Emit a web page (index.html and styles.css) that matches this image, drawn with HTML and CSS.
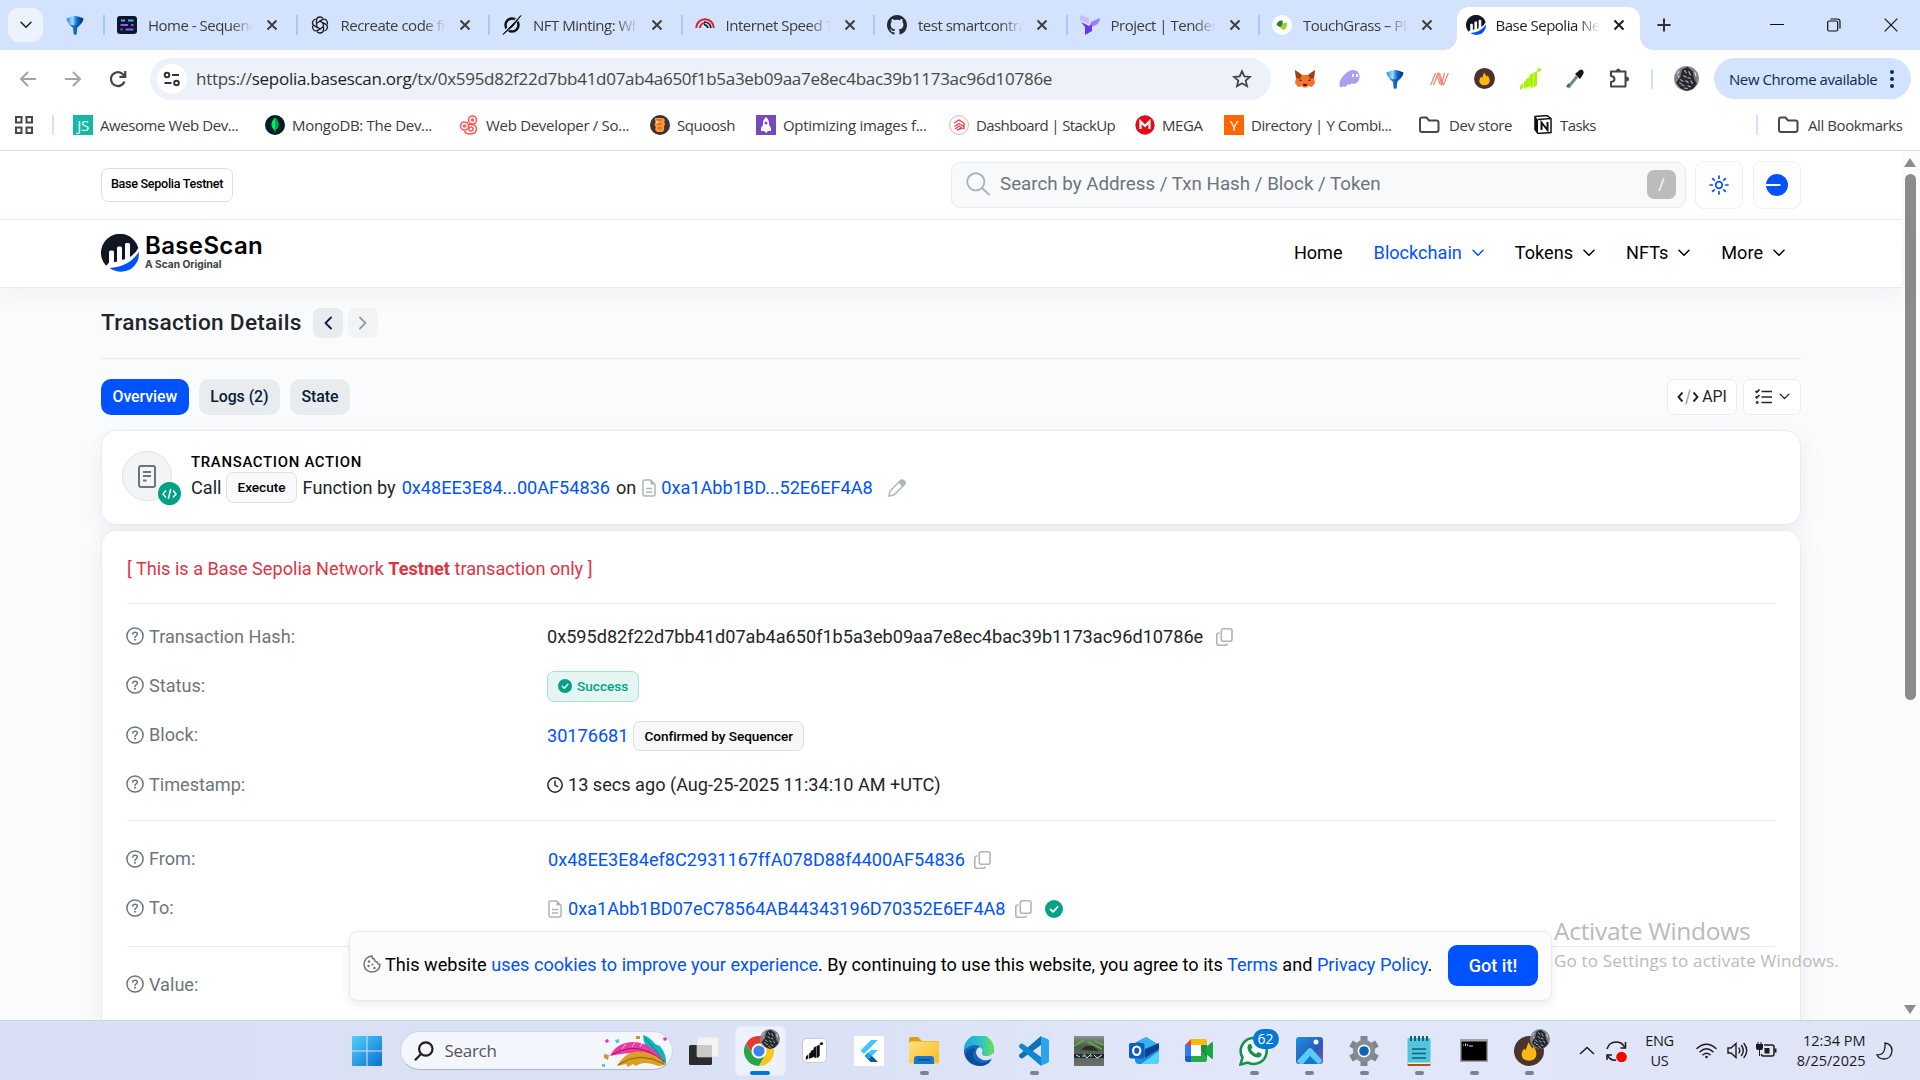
FILE: index.html
```html
<!DOCTYPE html>
<html lang="en">
<head>
<meta charset="utf-8">
<title>Base Sepolia Network Transaction Hash</title>
<link rel="stylesheet" href="styles.css">
</head>
<body>
<svg class="defs" width="0" height="0">
  <defs>
    <linearGradient id="gBlue" x1="0" y1="0" x2="1" y2="1"><stop offset="0" stop-color="#53d0fb"/><stop offset="1" stop-color="#0a6fd0"/></linearGradient>
    <linearGradient id="gDrop" x1="0" y1="0" x2="1" y2="0"><stop offset="0" stop-color="#1c86e6"/><stop offset=".35" stop-color="#a5dcff"/><stop offset=".6" stop-color="#0f6fd8"/><stop offset="1" stop-color="#06255e"/></linearGradient>
    <linearGradient id="gFold" x1="0" y1="0" x2="1" y2="1"><stop offset="0" stop-color="#ffe082"/><stop offset="1" stop-color="#fbbc1c"/></linearGradient>
    <linearGradient id="gEdge" x1="0" y1="0" x2="1" y2="0"><stop offset="0" stop-color="#1fa5e8"/><stop offset=".55" stop-color="#2cc3c9"/><stop offset="1" stop-color="#6ee04a"/></linearGradient>
    <linearGradient id="gF1" x1="0" y1="0" x2="0" y2="1"><stop offset="0" stop-color="#8a938c"/><stop offset=".35" stop-color="#4c5b4a"/><stop offset="1" stop-color="#6c706c"/></linearGradient>
    <linearGradient id="gPhoto" x1="0" y1="0" x2="1" y2="1"><stop offset="0" stop-color="#1793e6"/><stop offset=".6" stop-color="#2c59b8"/><stop offset="1" stop-color="#8a4db5"/></linearGradient>
    <radialGradient id="gFace"><stop offset="0" stop-color="#55585f"/><stop offset=".6" stop-color="#6a6d74"/><stop offset="1" stop-color="#8d9097"/></radialGradient>
  </defs>
  <symbol id="x" viewBox="0 0 12 12"><path d="M1.500 1.500l9 9M10.500 1.500l-9 9" fill="none" stroke="currentColor" stroke-width="2"/></symbol>
  <symbol id="chev" viewBox="0 0 12 8"><path d="M1 1.300l5 5 5-5" fill="none" stroke="currentColor" stroke-width="1.500" stroke-linecap="round" stroke-linejoin="round"/></symbol>
  <symbol id="drop" viewBox="0 0 20 20"><path d="M1.500 3.500Q10-1.500 18.500 3.500 18 8 12.300 12.500L11.500 19.500h-3l-.8-7Q2 8 1.500 3.500z" fill="url(#gDrop)"/><path d="M4 9q5 3 12-1l-4 5-.7 6.500H9L8 13z" fill="#0b56b5" opacity=".8"/></symbol>
  <symbol id="base" viewBox="0 0 38 38"><path d="M5.150 31.850A19 19 0 1 1 37.330 14Q35 19 29 23V10.500a1.500 1.500 0 0 0-1.500-1.500h-2a1.500 1.500 0 0 0-1.500 1.500V25l-3 1V14a1.500 1.500 0 0 0-1.500-1.500h-2A1.500 1.500 0 0 0 16 14v13.500l-3 .7V18a1.500 1.500 0 0 0-1.500-1.500h-2A1.500 1.500 0 0 0 8 18v10.500q-1 1.500-2.850 3.350z" fill="#111722"/><path d="M8.500 34Q28 33 37.700 18 39 28 30 35 19 41 8.500 34z" fill="#0052ff"/></symbol>
  <symbol id="folder" viewBox="0 0 22 18"><path d="M2 3.500Q2 1.500 4 1.500h4.500l2.500 3h7.500q2 0 2 2V14q0 2-2 2H4q-2 0-2-2z" fill="none" stroke="#474747" stroke-width="2"/></symbol>
  <symbol id="face" viewBox="0 0 24 24"><circle cx="12" cy="12" r="12" fill="url(#gFace)"/><path d="M8 3l5-2 5 4 1 7 3 5-4 5-6 2-6-3-4-5 4-5z" fill="#25272c"/><path d="M10 4l2 3M14 5l2 4M9 9l3 2M13 11l3 1M6 13l3 2M11 14l3 2M16 14l2 3M7 18l3 1M13 19l3 1M10 21l3 1M5 16l2 1" stroke="#b4b7bd" stroke-width="1.100"/><path d="M3 8l2-3M4 11l1-2M20 6l1 4" stroke="#d6d8dc" stroke-width="1.200"/></symbol>
  <symbol id="fire" viewBox="0 0 24 24"><circle cx="12" cy="12" r="12" fill="#4b342b"/><path d="M11.500 5Q13 7.500 14.800 10l.9-1.800Q18 11.500 18 14.500 17.500 19.500 12 19.800 6.500 19.500 6 14.500 6.300 12 8.200 10l1 1.500Q10.500 8 11.500 5z" fill="#fdb912"/></symbol>
  <symbol id="help" viewBox="0 0 18 18"><circle cx="9" cy="9" r="8.100" fill="none" stroke="currentColor" stroke-width="1.500"/><path d="M6.700 7.100Q6.900 5.200 9 5.200q2.300 0 2.400 1.900 0 1.300-1.500 2-.9.400-.9 1.300" fill="none" stroke="currentColor" stroke-width="1.500" stroke-linecap="round"/><circle cx="9" cy="12.700" r="1" fill="currentColor"/></symbol>
  <symbol id="copy" viewBox="0 0 17 18"><rect x="5.300" y=".8" width="10.700" height="12.500" rx="2" fill="none" stroke="currentColor" stroke-width="1.600"/><path d="M3.500 5H2.800q-2 0-2 2v8.200q0 2 2 2h6.400q2 0 2-1.700" fill="none" stroke="currentColor" stroke-width="1.600"/></symbol>
  <symbol id="doc" viewBox="0 0 14 18"><path d="M1 2.500Q1 1 2.500 1h6L13 5.500v10q0 1.500-1.500 1.500h-9Q1 17 1 15.500z" fill="none" stroke="currentColor" stroke-width="1.500"/><path d="M8.500 1v4.500H13z" fill="currentColor"/><path d="M4 9.500h6M4 13h6" stroke="currentColor" stroke-width="1.500"/></symbol>
  <symbol id="ok" viewBox="0 0 18 18"><circle cx="9" cy="9" r="9" fill="#00a186"/><path d="M5.500 9.300l2.500 2.500 4.700-5" fill="none" stroke="#fff" stroke-width="1.800" stroke-linecap="round" stroke-linejoin="round"/></symbol>
  <symbol id="horse" viewBox="0 0 22 22"><path d="M1 18l3-3v5l-3 2zM5 14l4-3v7l-4 3zM7 11l4-2v9l-3 2zM10.500 7L14 5v14l-2 1-1.500-4zM14.500 5L18 3v14l-3.500 3zM18 1.500Q20-.5 22 1v2l-3 1z" fill="currentColor"/></symbol>
</svg>

<header class="browser">
  <div class="tabstrip">
    <button class="tabsearch"><svg width="12" height="8"><use href="#chev"/></svg></button>
    <div class="pinned"><svg width="20" height="20"><use href="#drop"/></svg></div>
    <div class="tab"><svg width="20" height="18" viewBox="0 0 20 18"><rect width="20" height="18" rx="3" fill="#15132b"/><path d="M4 4.500h4M11 4.500h5.500" stroke="#36b8e8" stroke-width="2"/><path d="M3.500 9H11" stroke="#8b5cf6" stroke-width="2"/><path d="M14 9h2.500M3.500 13.500h2" stroke="#5b6ef2" stroke-width="2"/><path d="M8.500 13.500h8" stroke="#6a6ff5" stroke-width="2"/></svg><span class="ttl">Home - Sequence</span><svg class="cl" width="12" height="12"><use href="#x"/></svg></div>
    <div class="tab"><svg width="18" height="18" viewBox="0 0 18 18" fill="none" stroke="#1c1c1c" stroke-width="1.300"><g id="pet"><path d="M9 5.200L5.500 7.200V3.800Q6 1 9 1q2 0 3 1.300"/></g><use href="#pet" transform="rotate(60 9 9)"/><use href="#pet" transform="rotate(120 9 9)"/><use href="#pet" transform="rotate(180 9 9)"/><use href="#pet" transform="rotate(240 9 9)"/><use href="#pet" transform="rotate(300 9 9)"/></svg><span class="ttl">Recreate code fro</span><svg class="cl" width="12" height="12"><use href="#x"/></svg></div>
    <div class="tab"><svg width="20" height="20" viewBox="0 0 20 20"><circle cx="10" cy="10" r="6.500" fill="none" stroke="#111" stroke-width="2.500"/><path d="M1.500 19L18.500 1" stroke="#d3e3fd" stroke-width="3.500"/><path d="M1 19.500L19 .5 11 11z" fill="#111" stroke="#111"/></svg><span class="ttl">NFT Minting: Wha</span><svg class="cl" width="12" height="12"><use href="#x"/></svg></div>
    <div class="tab"><svg width="20" height="20" viewBox="0 0 20 20" fill="none"><path d="M1.200 13A8.800 8.800 0 0 1 18.800 13M5 13a5 5 0 0 1 5-5" stroke="#d8202c" stroke-width="2"/><path d="M9 7q6 0 7 6M9 9.500q3 .5 4 3.500" stroke="#1b1b1b" stroke-width="1.700"/></svg><span class="ttl">Internet Speed Te</span><svg class="cl" width="12" height="12"><use href="#x"/></svg></div>
    <div class="tab"><svg width="20" height="20" viewBox="0 0 16 16"><path fill="#24292f" d="M8 0C3.580 0 0 3.580 0 8c0 3.540 2.290 6.530 5.470 7.590.4.070.55-.17.55-.38 0-.19-.01-.82-.01-1.490-2.010.37-2.530-.49-2.690-.94-.09-.23-.48-.94-.82-1.130-.28-.15-.68-.52-.01-.53.63-.01 1.080.58 1.230.82.72 1.210 1.870.87 2.330.66.070-.52.28-.87.51-1.070-1.780-.2-3.640-.89-3.640-3.950 0-.87.31-1.590.82-2.150-.08-.2-.36-1.020.08-2.120 0 0 .67-.21 2.200.82.64-.18 1.320-.27 2-.27s1.360.09 2 .27c1.530-1.040 2.200-.82 2.200-.82.44 1.100.16 1.920.08 2.120.51.56.82 1.270.82 2.150 0 3.070-1.870 3.750-3.650 3.950.29.25.54.73.54 1.480 0 1.070-.01 1.930-.01 2.200 0 .21.15.46.55.38A8.010 8.010 0 0 0 16 8c0-4.420-3.580-8-8-8z"/></svg><span class="ttl">test smartcontract</span><svg class="cl" width="12" height="12"><use href="#x"/></svg></div>
    <div class="tab"><svg width="20" height="20" viewBox="0 0 20 20"><path d="M0 0l9 3v6L0 5z" fill="#cdbcfb"/><path d="M20 3l-9 4-2 5 5-1q6-3 6-8z" fill="#9b7df7"/><path d="M1 7l8 4 3-1v6l-7 4V12z" fill="#6837f5"/></svg><span class="ttl">Project | Tenderly</span><svg class="cl" width="12" height="12"><use href="#x"/></svg></div>
    <div class="tab last"><svg width="20" height="20" viewBox="0 0 20 20"><circle cx="10" cy="10" r="10" fill="#fff"/><path d="M4.500 10q1-5 6-4.500 1 5-2 7z" fill="#25803a"/><path d="M9 13q0-5 6-5.500Q15.500 14 11 15z" fill="#9ad51f"/></svg><span class="ttl">TouchGrass – Play</span><svg class="cl" width="12" height="12"><use href="#x"/></svg></div>
    <div class="tab active"><svg width="20" height="20"><use href="#base"/></svg><span class="ttl">Base Sepolia Netw</span><svg class="cl" width="12" height="12"><use href="#x"/></svg></div>
    <svg class="plus" width="14" height="14" viewBox="0 0 14 14"><path d="M7 .5v13M.5 7h13" stroke="#333" stroke-width="2"/></svg>
    <div class="winctl">
      <svg width="14" height="14" viewBox="0 0 14 14"><path d="M0 6.500h14" stroke="#111"/></svg>
      <svg width="14" height="14" viewBox="0 0 14 14" fill="none" stroke="#111" stroke-width="1.200"><rect x=".7" y="3" width="10" height="10" rx="1.500"/><path d="M3.500 1h7Q13 1 13 3.500v7"/></svg>
      <svg width="14" height="14" viewBox="0 0 14 14"><path d="M.7.7l12.600 12.600M13.300.7L.7 13.300" stroke="#111" stroke-width="1.200"/></svg>
    </div>
  </div>

  <div class="toolbar">
    <div class="navbtns">
      <svg width="18" height="18" viewBox="0 0 18 18" fill="none" stroke="#a3a5a8" stroke-width="2"><path d="M17 9H2M9 2L2 9l7 7"/></svg>
      <svg width="18" height="18" viewBox="0 0 18 18" fill="none" stroke="#a3a5a8" stroke-width="2"><path d="M1 9h15M9 2l7 7-7 7"/></svg>
      <svg width="18" height="18" viewBox="0 0 18 18" fill="none" stroke="#444" stroke-width="2.200"><path d="M15.500 11.500A7 7 0 1 1 14 4.200L16 6.200"/><path d="M16.200 1v5.800h-5.800"/></svg>
    </div>
    <div class="omni">
      <span class="chip"><svg width="18" height="16" viewBox="0 0 18 16" fill="none" stroke="#333" stroke-width="2"><circle cx="4" cy="4" r="2.300"/><path d="M9 4h7M1.500 12h7"/><circle cx="13.500" cy="12" r="2.300"/></svg></span>
      <span class="url"><i>https://</i>sepolia.basescan.org<i>/tx/0x595d82f22d7bb41d07ab4a650f1b5a3eb09aa7e8ec4bac39b1173ac96d10786e</i></span>
      <svg class="star" width="20" height="20" viewBox="0 0 20 20"><path d="M10 2.200l2.300 5.200 5.700.5-4.300 3.700 1.300 5.600-5-3-5 3 1.300-5.600L2 7.900l5.700-.5z" fill="none" stroke="#444" stroke-width="1.800"/></svg>
    </div>
    <div class="exts">
      <svg width="20" height="19" viewBox="0 0 20 19"><path d="M0 1l7 5h6l7-5-1 8 1 5-3 4-4-1-1 1.500H8L7 17l-4 1-3-4 1-5z" fill="#f5722a"/><path d="M0 1l7 5-2 4-4-1zM20 1l-7 5 2 4 4-1z" fill="#a3401b"/><path d="M5 10l2 2H4.500zM15 10l-2 2h2.500zM8 15h4l-.5 2h-3z" fill="#2f1d20"/></svg>
      <svg width="21" height="20" viewBox="0 0 21 20"><path d="M1 18Q-1 12 5 6 12-1 18 2q4 3 2 9-2 4-6 4l-1-1q-2 3-4 1-2 4-5 2-1 2-3 1z" fill="#ab9ff2"/><path d="M14 5v3M18 5v3" stroke="#fff" stroke-width="1.800"/></svg>
      <svg width="20" height="20"><use href="#drop"/></svg>
      <svg width="19" height="14" viewBox="0 0 19 14" fill="none" stroke="#e68a6b" stroke-width="1.200"><path d="M.8 13L5.500 1M3.500 13L8 1l4 12 1-1L9.500 1M6.500 3l4 10M13.500 13L18.300 1M12.500 9l2-8"/></svg>
      <svg width="21" height="21"><use href="#fire"/></svg>
      <svg class="lime" width="22" height="22"><use href="#horse"/></svg>
      <svg width="18" height="20" viewBox="0 0 18 20"><path d="M2 18.500L11 7.500" stroke="#6a8f7c" stroke-width="3"/><path d="M9 5l5 5 3-4.500q1.500-3-.5-4.500t-4 1z" fill="#151515"/><path d="M1 18l2-3" stroke="#2c6b3c" stroke-width="2"/></svg>
      <svg width="21" height="21" viewBox="0 0 21 21"><path d="M2 3.500h14.500v15H2v-4.500q3.500-.5 3.500-3t-3.500-3z" fill="none" stroke="#444" stroke-width="2" stroke-linejoin="round"/><path d="M7 3q0-2.500 2.300-2.500T11.500 3zM17 8.500q3 0 3 2.500t-3 2.500z" fill="#444"/></svg>
    </div>
    <i class="vsep"></i>
    <svg class="me" width="25" height="25"><use href="#face"/></svg>
    <div class="update">New Chrome available<svg width="4" height="18" viewBox="0 0 4 18"><circle cx="2" cy="2" r="2"/><circle cx="2" cy="9" r="2"/><circle cx="2" cy="16" r="2"/></svg></div>
  </div>

  <nav class="marks">
    <svg width="18" height="18" viewBox="0 0 18 18" fill="none" stroke="#474747" stroke-width="2"><rect x="1" y="1" width="5.500" height="5.500"/><rect x="11.500" y="1" width="5.500" height="5.500"/><rect x="1" y="11.500" width="5.500" height="5.500"/><rect x="11.500" y="11.500" width="5.500" height="5.500"/></svg>
    <i class="vsep"></i>
    <a><b class="ic js">JS</b>Awesome Web Dev...</a>
    <a class="wide"><svg class="ic" viewBox="0 0 20 20"><circle cx="10" cy="10" r="10" fill="#011e2b"/><path d="M10 2.500q4 4.500 3.500 8Q13 14 10.400 15v2.500h-.8V15Q7 14 6.500 10.500 6 7 10 2.500z" fill="#00ed64"/><path d="M10 2.500q4 4.500 3.500 8Q13 14 10 15z" fill="#00a844"/></svg>MongoDB: The Dev...</a>
    <a class="wide"><svg class="ic" viewBox="0 0 20 20" fill="none" stroke="#fa5c5c" stroke-width="1.600"><circle cx="13.500" cy="5" r="4"/><circle cx="13.500" cy="5" r="1"/><circle cx="5.500" cy="11" r="4"/><circle cx="5.500" cy="11" r="1"/><path d="M10 9.500q7-1 7.500 4 0 5.500-7 5.500-4 0-5-3"/><circle cx="12" cy="14" r="2"/></svg>Web Developer / So...</a>
    <a><svg class="ic" viewBox="0 0 20 20"><circle cx="10" cy="10" r="10" fill="#3a3432"/><path d="M5 3h8q3 2 1 4 2 2 0 4 1 3-1 6H7q-3-3-1-5-3-2 0-5-2-2-1-4z" fill="#ff9730"/><path d="M6 5h6M7 9h5M8 13h4" stroke="#c44b17" stroke-width="1.200"/><circle cx="7" cy="7" r="1.500" fill="#f7d6a0"/></svg>Squoosh</a>
    <a class="wide"><svg class="ic" viewBox="0 0 20 20"><path d="M0 0h20v20H0z" fill="#764abc"/><path d="M10 2q3.500 3 3 8l2 3v3h-3l-2 2-2-2H5v-3l2-3q-.5-5 3-8z" fill="#fff"/><circle cx="10" cy="8" r="1.500" fill="#764abc"/></svg>Optimizing images f...</a>
    <a class="slim"><svg class="ic" viewBox="0 0 20 20" fill="none" stroke="#e8434f"><circle cx="10" cy="10" r="9.400" stroke="#f4a5ab"/><path d="M5 8l5-3 5 3M5.500 11.500L10 8.500l4.500 3M8 15l4-1.500M6 14l4-3 4 3M15 8v6" stroke-width="1.400"/></svg>Dashboard | StackUp</a>
    <a><svg class="ic" viewBox="0 0 20 20"><circle cx="10" cy="10" r="9.700" fill="#e50b16"/><path d="M5.500 14V6.500L10 11l4.500-4.500V14" fill="none" stroke="#fff" stroke-width="2.200"/></svg>MEGA</a>
    <a><b class="ic yc">Y</b>Directory | Y Combi...</a>
    <a><svg class="fd" width="22" height="18"><use href="#folder"/></svg>Dev store</a>
    <a class="slim"><svg class="nt" width="18" height="19" viewBox="0 0 18 19"><path d="M1 1.500l12-1 4 3v14l-13 1-3-4z" fill="#fff" stroke="#111" stroke-width="1.500"/><path d="M1 1.500l3 3v14l-3-4z" fill="#111"/><path d="M4 4.500l13-1" stroke="#111" stroke-width="1.500"/><path d="M7.500 15V7.500l6 7.500V7" stroke="#111" stroke-width="2" fill="none"/></svg>Tasks</a>
    <i class="vsep"></i>
    <a><svg class="fd" width="22" height="18"><use href="#folder"/></svg>All Bookmarks</a>
  </nav>
</header>

<div class="viewport">
  <main class="site">
    <div class="topbar">
      <div class="netbadge">Base Sepolia Testnet</div>
      <div class="tools">
        <div class="search"><svg width="24" height="24" viewBox="0 0 24 24" fill="none" stroke="#a9b2bb" stroke-width="1.900" stroke-linecap="round"><circle cx="9.800" cy="9.800" r="8.600"/><path d="M16 16l7 6.500"/></svg><span>Search by Address / Txn Hash / Block / Token</span><kbd>/</kbd></div>
        <div class="sq"><svg width="20" height="20" viewBox="0 0 20 20" fill="none" stroke="#0052ff" stroke-width="1.700" stroke-linecap="round"><circle cx="10" cy="10" r="3.300"/><path d="M10 1v2.300M10 16.700V19M1 10h2.300M16.700 10H19M3.600 3.600l1.600 1.600M14.800 14.800l1.600 1.600M16.400 3.600l-1.600 1.600M5.200 14.800l-1.600 1.600"/></svg></div>
        <div class="sq"><svg width="22" height="22" viewBox="0 0 22 22"><circle cx="11" cy="11" r="11" fill="#0052ff"/><path d="M0 11h14.500" stroke="#fff" stroke-width="2"/></svg></div>
      </div>
    </div>
    <div class="navbar">
      <div class="logo"><svg width="38" height="38"><use href="#base"/></svg><div><strong>BaseScan</strong><small>A Scan Original</small></div></div>
      <nav class="menu"><a>Home</a><a class="on">Blockchain<svg width="12" height="8"><use href="#chev"/></svg></a><a>Tokens<svg width="12" height="8"><use href="#chev"/></svg></a><a>NFTs<svg width="12" height="8"><use href="#chev"/></svg></a><a>More<svg width="12" height="8"><use href="#chev"/></svg></a></nav>
    </div>
    <section class="content">
      <div class="head"><h1>Transaction Details</h1>
        <span class="pg"><svg width="8" height="14" viewBox="0 0 8 14"><path d="M7 1.500L1.500 7 7 12.500" fill="none" stroke="#081d35" stroke-width="1.800" stroke-linecap="round"/></svg></span>
        <span class="pg off"><svg width="8" height="14" viewBox="0 0 8 14"><path d="M1 1.500L6.500 7 1 12.500" fill="none" stroke="#081d35" stroke-width="1.800" stroke-linecap="round"/></svg></span>
      </div>
      <div class="tabs">
        <span class="pill cur">Overview</span><span class="pill">Logs (2)</span><span class="pill">State</span>
        <span class="btn api"><svg width="22" height="16" viewBox="0 0 22 16" fill="none" stroke="#212529" stroke-width="1.900"><path d="M5.500 3.500L1.500 8l4 4.500M16.500 3.500l4 4.500-4 4.500"/><path d="M13 .5L9 15.500" stroke="#a5a9ad" stroke-width="1.500"/></svg>API</span>
        <span class="btn"><svg width="17" height="16" viewBox="0 0 17 16" fill="none" stroke="#212529" stroke-width="1.700"><path d="M6.500 2.500H17M6.500 8H17M6.500 13.500H17M.5 2l1.300 1.300L4.500.5M.5 7.500l1.300 1.300L4.500 6"/><circle cx="2.200" cy="13.500" r=".6"/></svg><svg width="11" height="7"><use href="#chev"/></svg></span>
      </div>

      <article class="card action">
        <div class="avatar"><svg width="18" height="23" viewBox="0 0 18 23" fill="none" stroke="#6c757d" stroke-width="2"><rect x="1" y="1" width="16" height="21" rx="2"/><path d="M5 7h8M5 11h8M5 15.500h3.500"/></svg>
          <span class="code"><svg width="15" height="12" viewBox="0 0 15 12" fill="none" stroke="#fff" stroke-width="1.500"><path d="M4 2.500L1 6l3 3.500M11 2.500L14 6l-3 3.500M8.700 1L6.300 11"/></svg></span></div>
        <div><div class="cap">TRANSACTION ACTION</div>
          <div class="line">Call<span class="tag">Execute</span>Function by<a class="a1">0x48EE3E84...00AF54836</a>on<svg class="mut d1" width="14" height="18"><use href="#doc"/></svg><a>0xa1Abb1BD...52E6EF4A8</a><svg class="mut pen" width="18" height="18" viewBox="0 0 18 18"><path d="M1 17l1-5L12 2q2-2 4 0t0 4L6 16z" fill="none" stroke="currentColor" stroke-width="1.500"/><path d="M10.500 3.500L13 1q2-1 4 1t0 3.500l-2.500 2.500z" fill="currentColor"/></svg></div></div>
      </article>

      <article class="card details">
        <p class="warn">[ This is a Base Sepolia Network <b>Testnet</b> transaction only ]</p>
        <div class="group">
          <div class="row"><label><svg width="18" height="18"><use href="#help"/></svg>Transaction Hash:</label><div>0x595d82f22d7bb41d07ab4a650f1b5a3eb09aa7e8ec4bac39b1173ac96d10786e<svg class="mut c1" width="17" height="18"><use href="#copy"/></svg></div></div>
          <div class="row"><label><svg width="18" height="18"><use href="#help"/></svg>Status:</label><div><span class="status"><svg width="14" height="14"><use href="#ok"/></svg>Success</span></div></div>
          <div class="row"><label><svg width="18" height="18"><use href="#help"/></svg>Block:</label><div><a>30176681</a><span class="tag conf">Confirmed by Sequencer</span></div></div>
          <div class="row"><label><svg width="18" height="18"><use href="#help"/></svg>Timestamp:</label><div><svg class="clock" width="16" height="16" viewBox="0 0 16 16" fill="none" stroke="#212529" stroke-width="1.500"><circle cx="8" cy="8" r="7.200"/><path d="M8 3.500V8l3 2"/></svg>13 secs ago (Aug-25-2025 11:34:10 AM +UTC)</div></div>
        </div>
        <div class="group g2">
          <div class="row"><label><svg width="18" height="18"><use href="#help"/></svg>From:</label><div><a class="from">0x48EE3E84ef8C2931167ffA078D88f4400AF54836</a><svg class="mut c2" width="17" height="18"><use href="#copy"/></svg></div></div>
          <div class="row"><label><svg width="18" height="18"><use href="#help"/></svg>To:</label><div><svg class="mut d2" width="14" height="18"><use href="#doc"/></svg><a>0xa1Abb1BD07eC78564AB44343196D70352E6EF4A8</a><svg class="mut c2" width="17" height="18"><use href="#copy"/></svg><svg class="vok" width="18" height="18"><use href="#ok"/></svg></div></div>
        </div>
        <div class="group g3">
          <div class="row"><label><svg width="18" height="18"><use href="#help"/></svg>Value:</label></div>
        </div>
      </article>
    </section>
  </main>
  <aside class="scroll"><i class="up"></i><i class="thumb"></i><i class="down"></i></aside>
  <div class="cookie"><svg width="18" height="18" viewBox="0 0 18 18" fill="none" stroke="#6c757d" stroke-width="1.500"><path d="M9 1Q2 1.500 1 9q.5 7.500 8 8 7.500-.5 8-7.500-2.500-.2-2.800-2.500Q11.500 7 11.300 4 9 4 9 1z"/><g fill="#6c757d" stroke="none"><circle cx="6" cy="6.500" r="1.200"/><circle cx="5.500" cy="11" r="1.200"/><circle cx="9.500" cy="9.500" r="1"/><circle cx="11.500" cy="13" r="1.200"/></g></svg><span>This website <a>uses cookies to improve your experience</a>. By continuing to use this website, you agree to its <a>Terms</a> and <a>Privacy Policy</a>.</span><button>Got it!</button></div>
  <div class="activate"><div>Activate Windows</div><p>Go to Settings to activate Windows.</p></div>
</div>

<footer class="taskbar">
  <div class="app"><svg width="30" height="30" viewBox="0 0 30 30" fill="url(#gBlue)"><path d="M0 1q0-1 1-1h13.500v14.500H0zM15.500 0H29q1 0 1 1v13.500H15.500zM0 15.500h14.500V30H1q-1 0-1-1zM15.500 15.500H30V29q0 1-1 1H15.500z"/></svg></div>
  <div class="tsearch"><svg width="20" height="20" viewBox="0 0 20 20" fill="none" stroke="#1d1d1d" stroke-width="2.200"><circle cx="11.800" cy="8" r="6.700"/><path d="M7 13l-6 6.200"/></svg><span>Search</span>
    <svg class="art" width="66" height="32" viewBox="0 0 66 32"><path d="M41 0Q48 2 53 9l5 2q7 9 6 18Q42 20 41 0z" fill="#12b5bd"/><path d="M43 3q8 8 19 24" stroke="#067d8a" fill="none"/><path d="M8 21Q14 8 30 7q18-1 34 22Q48 14 30 18q-14 1-22 3z" fill="#ee3aa0"/><path d="M10 20q26-16 52 7" stroke="#a70f68" fill="none"/><path d="M20 14l4-5M30 12l3-5M38 12l2-4" stroke="#fff" stroke-width=".7"/><path d="M15 31q10-17 26-14 15 2 23 13l-8 1q-14-6-22 0l-3-2-5 3-2-3z" fill="#dba022"/><path d="M16 30q22-15 46-1" stroke="#8c5a0c" fill="none"/><path d="M3 5l3-1 1 3-3 1z" fill="#ee3aa0"/><path d="M13 5l4-1v4h-3z" fill="#41d3e5"/><path d="M34 1h4v3h-4z" fill="#c79745"/><path d="M61 3l3-1 1 3-3 1z" fill="#ee3aa0"/><path d="M2 19l5 1-1 5-4-2z" fill="#c79745"/><path d="M0 29h3v3H0z" fill="#41d3e5"/></svg></div>
  <div class="app"><svg width="30" height="28" viewBox="0 0 30 28"><rect y="8" width="23" height="20" rx="1.500" fill="#2c2c2c"/><rect x="8" width="22" height="20" rx="1.500" fill="#f3f3f2" stroke="#d8d8d6" stroke-width=".6"/><path d="M8 8h15v12H8z" fill="#c9c9c8"/></svg></div>
  <div class="app tile"><svg width="30" height="30" viewBox="0 0 30 30"><circle cx="15" cy="15" r="15" fill="#fff"/><path d="M2 7.500A15 15 0 0 1 28 7.500H15A7.500 7.500 0 0 0 8.500 18.700z" fill="#e33b2e"/><path d="M2 7.500A15 15 0 0 0 15 30l6.500-11.300A7.500 7.500 0 0 1 8.500 18.700z" fill="#2ba24c"/><path d="M28 7.500A15 15 0 0 1 15 30l6.500-11.300A7.500 7.500 0 0 0 15 7.500z" fill="#fdc515"/><circle cx="15" cy="15" r="7" fill="#fff"/><circle cx="15" cy="15" r="5.600" fill="#3f82ee"/></svg><svg class="mini" width="20" height="20"><use href="#face"/></svg><i class="run wide"></i></div>
  <div class="app"><span class="wh"><svg width="18" height="18"><use href="#horse"/></svg></span></div>
  <div class="app"><span class="flt"><svg width="18" height="22" viewBox="0 0 18 22"><path d="M11 0h7L4 14l-3.500-3.500z" fill="#45c5f8"/><path d="M11 10h7l-6 6-3.500-3.500z" fill="#45c5f8"/><path d="M8 12.500L4.700 16l6 6H18l-6-6z" fill="#0b579f"/><path d="M8.200 12.300l3.700 3.700-3.500 3.500L4.700 16z" fill="#1fa1e4"/></svg></span></div>
  <div class="app"><svg width="30" height="28" viewBox="0 0 30 28"><path d="M0 2q0-2 2-2h7l4 4h15q2 0 2 2v6H0z" fill="#e0a106"/><rect y="4.500" width="30" height="22" rx="2" fill="url(#gFold)"/><path d="M5 27v-5q0-3 3-3h14q3 0 3 3v5z" fill="#1378cf"/><path d="M9 22.800h12" stroke="#0a4c91" stroke-width="1.500"/></svg><i class="run"></i></div>
  <div class="app"><svg width="30" height="30" viewBox="0 0 30 30"><circle cx="15" cy="15" r="15" fill="#1269bd"/><path d="M0 14A15 15 0 0 1 30 13q0 7-8 7-4 0-4-3 2-3-1-6Q9 6 0 14z" fill="url(#gEdge)"/><path d="M11 13q-4 5-.5 10 5 6 13 3l4-2q-4 6-12 6Q3 28 1 18 5 12 11 13z" fill="#0c4c9c"/><path d="M18 17q0 3 4 3 5 0 8-4v6l-3 1q-4 2-8 1-6-2-7-7 0-5 4-6 4 2 2 6z" fill="#dbe4f8"/></svg></div>
  <div class="app"><svg width="30" height="30" viewBox="0 0 30 30"><path d="M22 0v9L4 22q-2 1-3-.5l-1-1Q-.5 19 1 18z" fill="#0b72b8"/><path d="M22 30v-9L4 8Q2 7 1 8.500l-1 1Q-.5 11 1 12z" fill="#1287d0"/><path d="M21 0l7.500 3Q30 4 30 5v20q0 1-1.500 2L21 30q1-1 1-2V2q0-1-1-2z" fill="#2ba4ee"/></svg><i class="run"></i></div>
  <div class="app"><svg width="30" height="30" viewBox="0 0 30 30"><path d="M0 0h30v30H0z" fill="url(#gF1)"/><path d="M0 10l10-6M14 6l14 7M20 5l10 4" stroke="#5fae4a" stroke-width="1.500"/><path d="M7 14l5-4h7l6 5z" fill="#26302a"/><path d="M0 18h30v4H0z" fill="#23282a"/><path d="M2 19l4 2M10 18l3 4 4-4M20 19l3 3 5-3" stroke="#d5dada" fill="none"/><path d="M8 20h3M16 20h2" stroke="#2ba5a0" stroke-width="2"/></svg></div>
  <div class="app"><svg width="30" height="27" viewBox="0 0 30 27"><path d="M4 7L17 0l13 8v15q0 4-4 4H10q-4 0-4-4z" fill="#1b8fe0"/><path d="M10 4l7-4 13 8-13 8z" fill="#33b4f2"/><path d="M16 12L30 6v6l-14 9z" fill="#0d3f8f"/><path d="M12 27l18-13v9q0 4-4 4z" fill="#52d3fb"/><rect y="6" width="15.500" height="15.500" rx="2" fill="#0f5fb8"/><ellipse cx="7.700" cy="13.700" rx="3.600" ry="4.200" fill="none" stroke="#fff" stroke-width="2.200"/></svg></div>
  <div class="app"><svg width="28" height="23" viewBox="0 0 28 23"><path d="M6 0h14q2 0 2 2v4H6z" fill="#fbb90b"/><path d="M6 0v6H0z" fill="#e8402f"/><path d="M0 6h6v11H0z" fill="#2d7bf0"/><path d="M0 17h6v6H2q-2 0-2-2z" fill="#1a5fd0"/><path d="M6 17h10v-5l6 5v4q0 2-2 2H6z" fill="#27a84a"/><path d="M16 6h6v12l-6-6z" fill="#17913a"/><path d="M6 6h10v11H6z" fill="#fff"/><path d="M21 8l6-5q1 0 1 1v15q0 1-1 1l-6-5z" fill="#1fa348"/></svg></div>
  <div class="app"><svg width="30" height="30" viewBox="0 0 30 30"><path d="M1.500 28.500l2-7A13 13 0 1 1 9 26.600z" fill="#f5faf8" stroke="#178f50" stroke-width="2.600"/><path d="M9.500 8.500q2-1.500 3 .5l1 2.500-1.500 2q1.500 3 5 4.500l2-2 3.500 1.500q.5 3-3 4-4 .5-8.500-4-4-5-1.500-9z" fill="#178f50"/></svg><b class="cnt">62</b><i class="run"></i></div>
  <div class="app"><svg width="27" height="27" viewBox="0 0 27 27"><rect width="27" height="27" rx="3" fill="url(#gPhoto)"/><path d="M1 24L12 12q2-2 4 0l10 11q-1 4-4 4H4q-2 0-3-3z" fill="#54cdf7"/><path d="M7 27l7-8 8 8z" fill="#1377cc"/><circle cx="20" cy="5" r="2.500" fill="#fff"/></svg><i class="run"></i></div>
  <div class="app"><svg width="30" height="30" viewBox="0 0 30 30"><path d="M15 0v30M2 7.500l26 15M28 7.500l-26 15" stroke="#7f868c" stroke-width="7"/><circle cx="15" cy="15" r="11" fill="#868d93"/><circle cx="15" cy="15" r="6.400" fill="#fff"/><circle cx="15" cy="15" r="4.800" fill="#0d62b5"/></svg><i class="run"></i></div>
  <div class="app"><svg width="24" height="30" viewBox="0 0 24 30"><rect x=".5" y="26" width="23" height="4" rx="1" fill="#b05413"/><rect x=".5" y="2" width="23" height="25" rx="1.500" fill="#54c4dd"/><path d="M.5 26.500h23v1.500H.5z" fill="#f0efe9"/><path d="M5 13h14M5 17.500h14M5 22h14" stroke="#09627f" stroke-width="1.700"/><path d="M4 0v5M8 0v5M12 0v5M16 0v5M20 0v5" stroke="#09627f" stroke-width="2"/></svg><i class="run"></i></div>
  <div class="app"><svg width="28" height="23" viewBox="0 0 28 23"><rect width="28" height="23" fill="#a3a3a3"/><path d="M1.500 2.500h25v19h-25z" fill="#000"/><path d="M3 6h1M5.500 4.500v2.500M7 5l1 2M9 7h4" stroke="#ddd"/></svg><i class="run"></i></div>
  <div class="app"><svg width="30" height="30"><use href="#fire"/></svg><svg class="mini" width="20" height="20"><use href="#face"/></svg><i class="run"></i></div>
  <div class="tray">
    <svg width="16" height="9" viewBox="0 0 16 9"><path d="M1 8l7-6.500L15 8" fill="none" stroke="#1b1b1b" stroke-width="1.500"/></svg>
    <svg width="21" height="22" viewBox="0 0 21 22" fill="none" stroke="#1b1b1b" stroke-width="1.500"><path d="M1 9Q3 2 10 2q6 0 8.500 5M19.500 2v6h-5M1 20v-5h5M2 16q3 5 8 4"/><circle cx="15.500" cy="17" r="5.300" fill="#f00" stroke="none"/></svg>
    <div class="lang">ENG<br>US</div>
    <svg width="21" height="16" viewBox="0 0 21 16" fill="none" stroke="#1b1b1b" stroke-width="1.500" stroke-linecap="round"><path d="M1 5.500Q10.500-3 20 5.500M4 8.700q6.500-5.800 13 0M7 11.700q3.500-3 7 0"/><circle cx="10.500" cy="14" r="1.300" fill="#1b1b1b" stroke="none"/></svg>
    <svg width="21" height="17" viewBox="0 0 21 17" fill="none" stroke="#1b1b1b" stroke-width="1.400" stroke-linecap="round"><path d="M1 6h3l5-4.500v14L4 11H1zM12 6q1.500 2.500 0 5M14.500 3.500q3.500 5 0 10M17 1.500q5.500 7 0 14"/></svg>
    <svg width="21" height="17" viewBox="0 0 21 17" fill="none" stroke="#1b1b1b" stroke-width="1.500"><path d="M8 3h8q2 0 2 2v7q0 2-2 2H7q-1.500 0-1.500-2"/><path d="M8.500 6h5v5.500h-5zM18.500 6.500h2v4h-2zM0 2h7v4q0 2-2 2H2Q0 8 0 6zM1.500 0h1v2h-1zM4.500 0h1v2h-1zM3 8h1v6H3z" fill="#1b1b1b" stroke="none"/></svg>
    <div class="time">12:34 PM<br>8/25/2025</div>
    <svg width="17" height="18" viewBox="0 0 17 18"><path d="M9 1q7 1 7 8-1 8-8 8-5 0-7-4 9 0 8-12z" fill="none" stroke="#1b1b1b" stroke-width="1.300"/></svg>
  </div>
</footer>
</body>
</html>
```
FILE: styles.css
```css
* { box-sizing: border-box; }
body { margin: 0; width: 1920px; height: 1080px; overflow: hidden; background: #fff; font-family: Roboto, sans-serif; color: #212529; display: flex; flex-direction: column; }
.defs { position: absolute; }
svg { flex: none; display: block; }
button { font: inherit; border: 0; padding: 0; }

/* Browser chrome */
.browser { height: 151px; flex: none; background: #fff; border-bottom: 1px solid #dcdcdc; font-family: "Open Sans", sans-serif; color: #3c3c3c; }
.tabstrip { height: 50px; background: #d3e3fd; display: flex; align-items: center; padding-left: 8px; }
.tabsearch { width: 35px; height: 34px; border-radius: 11px; background: #ecf3fe; color: #1f1f1f; display: grid; place-items: center; }
.pinned { width: 62px; height: 20px; border-right: 2px solid #a8c7fa; padding-left: 22px; }
.tab { width: 192.500px; height: 20px; display: flex; align-items: center; padding-left: 12px; border-right: 2px solid #a8c7fa; font-size: 15px; letter-spacing: -.500px; }
.tab > svg:first-child { width: 20px; }
.tab.last { border: 0; }
.ttl { width: 106px; margin-left: 11px; overflow: hidden; white-space: nowrap; -webkit-mask-image: linear-gradient(90deg, #000 78%, transparent 99%); mask-image: linear-gradient(90deg, #000 78%, transparent 99%); }
.cl { margin-left: 12px; color: #3f3f3f; }
.tab.active { position: relative; height: 43px; width: 183px; margin: 7px 0 0 4px; background: #fff; border: 0; border-radius: 12px 12px 0 0; padding: 0 0 7px 9px; color: #1f1f1f; }
.tab.active .ttl { width: 105px; margin-left: 10px; }
.tab.active .cl { margin-left: 12px; color: #1f1f1f; }
.tab.active::before, .tab.active::after { content: ""; position: absolute; bottom: 0; width: 13px; height: 13px; }
.tab.active::before { left: -13px; background: radial-gradient(circle at 0 0, transparent 12.500px, #fff 13px); }
.tab.active::after { right: -13px; background: radial-gradient(circle at 100% 0, transparent 12.500px, #fff 13px); }
.plus { margin-left: 17px; }
.winctl { margin-left: auto; display: flex; gap: 43px; padding-right: 22px; }

.toolbar { height: 50px; display: flex; align-items: center; padding: 7px 0 0; }
.navbtns { width: 150px; display: flex; gap: 27px; padding-left: 19px; }
.omni { width: 1121px; height: 42px; border-radius: 21px; background: #ecf1fa; display: flex; align-items: center; padding-left: 7px; }
.chip { width: 30px; height: 30px; border-radius: 50%; background: #fff; display: grid; place-items: center; }
.url { margin-left: 9px; width: 1036px; font-size: 17px; letter-spacing: -.280px; color: #1f1f1f; white-space: nowrap; }
.url i { font-style: normal; color: #454746; }
.exts { display: grid; grid-template-columns: repeat(8, 45px); place-items: center; margin-left: 11px; }
.lime { color: #a8f400; }
.vsep { width: 2px; height: 20px; background: #d3e3fd; }
.toolbar .vsep { margin-left: 9px; }
.me { margin-left: 21px; }
.update { margin-left: 15px; width: 197px; height: 41px; border-radius: 21px; background: #d3e3fd; color: #0a2a57; font-size: 15px; letter-spacing: -.420px; display: flex; align-items: center; justify-content: space-between; padding: 0 17px 0 15px; white-space: nowrap; }
.update svg { fill: #0a2a57; }

.marks { height: 49px; display: grid; align-items: center; padding-left: 15px; font-size: 15px; letter-spacing: -.420px; white-space: nowrap;
  grid-template-columns: 37px 21px 192px 194px 191px 106px 193px 186px 89px 193px 116px 223px 20px 150px; }
.marks a { display: flex; align-items: center; }
.marks .wide { letter-spacing: -.300px; }
.marks .slim { letter-spacing: -.600px; }
.ic { width: 20px; height: 20px; margin-right: 7px; }
.fd { margin: 0 9px 0 1px; }
.nt { margin-right: 8px; margin-left: 1px; }
.js, .yc { color: #fff; display: grid; place-items: center; font: 15px/20px "Open Sans", sans-serif; letter-spacing: -.500px; }
.js { background: #14b8a6; }
.yc { background: #ff6600; }

/* Page */
.viewport { position: relative; height: 869px; flex: none; display: flex; overflow: hidden; background: #fff; }
.site { width: 1902px; background: #fafbfd; font-size: 18.125px; }
.topbar { height: 69px; background: #fff; border-bottom: 1px solid #e9ecef; display: flex; justify-content: space-between; align-items: center; padding: 0 101px; }
.netbadge { width: 132px; height: 34px; border: 1px solid #dcdfe2; border-radius: 7px; font: 500 12.600px/30px Roboto, sans-serif; letter-spacing: -.300px; text-align: center; color: #000; white-space: nowrap; }
.tools { display: flex; align-items: center; gap: 10px; }
.search { width: 735px; height: 46px; border: 1px solid #e9ecef; border-radius: 9px; background: #f8f9fb; display: flex; align-items: center; padding: 0 9px 2px 14px; color: #6c757d; font-size: 18.750px; margin-right: -1px; }
.search span { margin-left: 10px; flex: 1; }
kbd { width: 29px; height: 29px; border-radius: 7px; background: #bbbcbd; color: #fff; font: 16px/30px Roboto, sans-serif; text-align: center; }
.sq { width: 48px; height: 48px; border: 1px solid #eceef0; border-radius: 9px; display: grid; place-items: center; }
.navbar { position: relative; height: 68px; background: #fff; border-bottom: 1px solid #e9ecef; box-shadow: 0 8px 18px rgba(140,152,164,.09); display: flex; align-items: center; justify-content: space-between; padding: 0 101px 2px; }
.logo { display: flex; gap: 6px; }
.logo div { display: flex; flex-direction: column; }
.logo strong { font: 600 24px/27px Inter, sans-serif; color: #000; letter-spacing: .350px; margin-top: -2px; }
.logo small { font: 700 10.200px/12px Inter, sans-serif; color: #3d4147; white-space: nowrap; margin-top: -1px; }
.menu { display: flex; padding-right: 16px; color: #000; }
.menu a { display: flex; align-items: center; margin-left: 31px; }
.menu svg { margin-left: 10px; }
.menu .on { color: #0052ff; }

.content { padding: 0 101px; }
.head { height: 71px; border-bottom: 1px solid #e7eaee; display: flex; align-items: center; gap: 5px; }
h1 { font: 500 22.650px/30px Roboto, sans-serif; letter-spacing: .280px; margin: 0 6px 0 0; }
.pg { width: 30px; height: 30px; border-radius: 7px; background: #e9ecef; display: grid; place-items: center; }
.pg.off { background: #f1f3f5; }
.off svg { opacity: .4; }
.tabs { display: flex; gap: 10px; margin-top: 20px; height: 36px; font-size: 15.860px; line-height: 35px; }
.pill { background: #e9ecef; border-radius: 10px; padding: 0 11.500px; color: #081d35; font-weight: 500; letter-spacing: -.050px; }
.pill.cur { background: #0052ff; color: #fff; }
.btn { width: 58px; border: 1px solid #e9ecef; border-radius: 7px; background: #fff; display: flex; align-items: center; justify-content: center; gap: 7px; color: #212529; margin-left: -4px; padding-bottom: 1px; }
.btn.api { margin-left: auto; width: 70px; gap: 3px; }
.card { background: #fff; border: 1px solid #e9ecef; border-radius: 15px; box-shadow: 0 8px 20px rgba(130,145,165,.13); }
.action { margin-top: 15px; height: 95px; display: flex; padding: 20px; }
.avatar { position: relative; width: 50px; height: 50px; border-radius: 50%; background: #f3f4f6; border: 1px solid #dee2e6; display: grid; place-items: center; margin-right: 19px; }
.code { position: absolute; left: 35px; top: 30px; width: 23px; height: 23px; border-radius: 50%; background: #00a186; display: grid; place-items: center; }
.cap { color: #000; font: 500 14.900px/22px Roboto, sans-serif; letter-spacing: .700px; }
.line { height: 29px; display: flex; align-items: center; white-space: nowrap; }
.line a, .row a, .cookie a { color: #0052ff; }
.tag { height: 31px; border: 1px solid #dee2e6; border-radius: 7px; background: #f8f9fa; padding: 0 10px; margin: 0 6px 0 5px; font: 500 13.600px/29px Roboto, sans-serif; color: #000; }
.a1 { margin: 0 6px 0 6px; }
.mut { color: #adb5bd; }
.d1 { margin: 0 5px 0 6px; }
.pen { margin-left: 15px; }
.details { position: relative; margin-top: 5px; height: 560px; padding: 0 25px; }
.warn { margin: 0; height: 73px; line-height: 76px; color: #dc3545; border-bottom: 1px solid #e7eaee; }
.warn b { font-weight: 700; }
.group { padding-top: 8px; height: 217px; border-bottom: 1px solid #e9ecef; }
.row { height: 49.300px; display: grid; grid-template-columns: 420px 1fr; align-items: center; }
.row > * { display: flex; align-items: center; }
.row label { color: #6c757d; gap: 5px; margin-left: -1px; padding-bottom: 1px; }
.g2 { height: 126px; padding-top: 14px; }
.g2 label { padding-bottom: 2px; }
.g3 { padding-top: 13px; border: 0; }
.c1 { margin-left: 13px; }
.c2 { margin-left: 9px; }
.from { margin-left: 1px; }
.d2 { margin: 0 6px 0 1px; }
.vok { margin-left: 13px; }
.status { margin-top: 1px; height: 31px; border: 1px solid #a8e0d6; border-radius: 7px; background: #e5f5f2; color: #00a186; padding: 0 10px; font: 500 13.600px/29px Roboto, sans-serif; display: flex; align-items: center; gap: 5px; }
.conf { margin: 2px 0 0 5px; height: 30px; background: #f7f7f7; letter-spacing: -.050px; }
.clock { margin-right: 5px; }

.scroll { width: 18px; background: #fcfcfc; display: flex; flex-direction: column; align-items: center; padding: 7px 2px 6px 0; }
.up, .down { border: 6px solid transparent; width: 0; height: 0; }
.up { border-width: 0 6px 9px; border-bottom-color: #8b8b8b; }
.down { border-width: 9px 6px 0; border-top-color: #8b8b8b; margin-top: auto; }
.thumb { width: 11px; height: 526px; border-radius: 6px; background: #8b8b8b; margin-top: 7px; }

.cookie { position: absolute; left: 349px; top: 780px; width: 1203px; height: 70px; border: 1px solid #e9e9e9; border-radius: 9px; background: #fcfcfc; box-shadow: 0 4px 10px rgba(0,0,0,.08); display: flex; align-items: center; padding: 0 13px; font-size: 18.125px; color: #000; white-space: nowrap; }
.cookie > svg { margin: -4px 4px 0 0; }
.cookie > span { margin-top: -4px; }
.cookie button { margin: -2px 0 0 auto; width: 90px; height: 41px; border-radius: 9px; background: #0052ff; color: #fff; font-weight: 500; }
.activate { position: absolute; left: 1554px; top: 762px; font-family: "Open Sans", sans-serif; color: #b9babc; white-space: nowrap; }
.activate div { font-size: 24.500px; line-height: 36px; letter-spacing: -.300px; }
.activate p { margin: 0; font-size: 17px; line-height: 24px; letter-spacing: .180px; }

/* Taskbar */
.taskbar { height: 60px; flex: none; background: linear-gradient(90deg, #d9e0f5, #dbe2f6 45%, #e2e8f9 65%, #dee4f6); border-top: 1px solid #cbd3e6; display: flex; align-items: center; padding-left: 339.500px; font-family: "Open Sans", sans-serif; color: #1b1b1b; }
.app { position: relative; width: 55px; height: 60px; display: grid; place-items: center; }
.tsearch { width: 273px; height: 39px; margin: 0 4px 0 5px; border-radius: 20px; background: #f3f6fd; border: 1px solid #cdd5e8; border-bottom-color: #aeb7cc; display: flex; align-items: center; padding: 0 4px 0 13px; font-size: 17px; color: #555; letter-spacing: -.300px; }
.tsearch span { margin-left: 11px; }
.art { margin-left: auto; }
.tile::before { content: ""; position: absolute; left: 3px; top: 5px; width: 49px; height: 48px; border-radius: 5px; background: #edf1fb; border: 1px solid #e3e9f6; }
.tile > svg { position: relative; }
.app .mini { position: absolute; left: 28px; top: 8px; }
.run { position: absolute; left: 23px; top: 50px; width: 9px; height: 4px; border-radius: 2px; background: #7b8190; }
.run.wide { left: 18px; width: 20px; background: #0078d4; }
.wh { width: 25px; height: 25px; border-radius: 5px; background: #fff; border: 1px solid #c6cbd8; display: grid; place-items: center; color: #111; }
.flt { width: 30px; height: 30px; background: #fff; display: grid; place-items: center; }
.cnt { position: absolute; left: 26px; top: 8px; width: 26px; height: 20px; border-radius: 10px; background: #0078d4; color: #fff; font: 14px/20px "Open Sans", sans-serif; text-align: center; }
.tray { display: grid; grid-template-columns: 30px 30px 56px 38px 24px 34px 82px 38px; place-items: center; margin-left: 15px; font-size: 14.500px; line-height: 20px; letter-spacing: -.300px; }
.lang { text-align: center; }
.time { justify-self: end; text-align: right; letter-spacing: 0; }
```
